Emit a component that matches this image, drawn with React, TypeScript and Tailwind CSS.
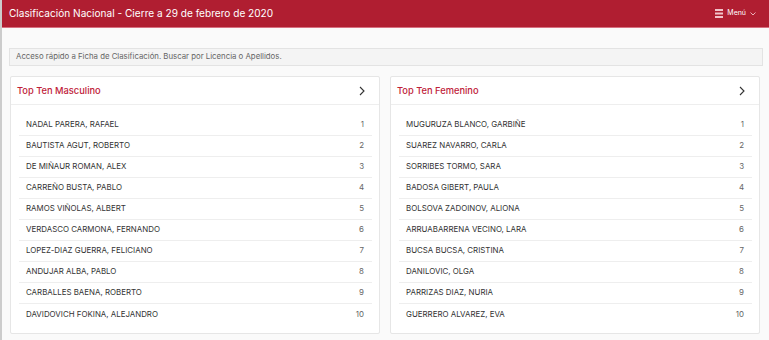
import React from "react";

const men = [
  "NADAL PARERA, RAFAEL",
  "BAUTISTA AGUT, ROBERTO",
  "DE MIÑAUR ROMAN, ALEX",
  "CARREÑO BUSTA, PABLO",
  "RAMOS VIÑOLAS, ALBERT",
  "VERDASCO CARMONA, FERNANDO",
  "LOPEZ-DIAZ GUERRA, FELICIANO",
  "ANDUJAR ALBA, PABLO",
  "CARBALLES BAENA, ROBERTO",
  "DAVIDOVICH FOKINA, ALEJANDRO",
];
const women = [
  "MUGURUZA BLANCO, GARBIÑE",
  "SUAREZ NAVARRO, CARLA",
  "SORRIBES TORMO, SARA",
  "BADOSA GIBERT, PAULA",
  "BOLSOVA ZADOINOV, ALIONA",
  "ARRUABARRENA VECINO, LARA",
  "BUCSA BUCSA, CRISTINA",
  "DANILOVIC, OLGA",
  "PARRIZAS DIAZ, NURIA",
  "GUERRERO ALVAREZ, EVA",
];

function Card({ title, names }: { title: string; names: string[] }) {
  return (
    <div className="flex-1 bg-white border border-[#e6e6e6] rounded-[2px] flex flex-col">
      <div className="h-[28px] flex items-center justify-between pl-[6px] pr-[13px] border-b border-[#eeeeee]">
        <span className="text-[9.3px] text-[#c0223a] font-medium">{title}</span>
        <svg width="8" height="10" viewBox="0 0 8 10" fill="none">
          <path d="M2 1l4 4-4 4" stroke="#333" strokeWidth="1.1" />
        </svg>
      </div>
      <div className="pl-[8px] pr-[7px] pt-[10px] pb-[8px]">
        {names.map((n, i) => (
          <div
            key={n}
            className={`h-[21px] flex items-center justify-between pl-[7px] pr-[8px] ${
              i < names.length - 1 ? "border-b border-[#eeeeee]" : ""
            }`}
          >
            <span className="text-[7.9px] text-[#333]">{n}</span>
            <span className="text-[7.9px] text-[#666]">{i + 1}</span>
          </div>
        ))}
      </div>
    </div>
  );
}

export default function App() {
  return (
    <div
      className="w-[769px] h-[340px] bg-[#fafafa] flex flex-col border-l-2 border-[#cccccc]"
      style={{ fontFamily: "Inter, 'Liberation Sans', sans-serif" }}
    >
      <div className="h-[28px] bg-[#b01e31] border-b border-[#d77080] flex items-center justify-between pl-[7px] pr-[13px] shrink-0">
        <span className="text-white text-[10.1px]">Clasificación Nacional - Cierre a 29 de febrero de 2020</span>
        <div className="flex items-center gap-[4px] text-white text-[7px]">
          <svg width="8" height="9" viewBox="0 0 8 9">
            <rect x="0" y="0" width="8" height="2" fill="#f2c3ca" />
            <rect x="0" y="3.5" width="8" height="2" fill="#f2c3ca" />
            <rect x="0" y="7" width="8" height="2" fill="#f2c3ca" />
          </svg>
          <span>Menú</span>
          <svg width="6" height="4" viewBox="0 0 6 4" fill="none">
            <path d="M0.5 0.5l2.5 2.5L5.5 0.5" stroke="#f2c3ca" strokeWidth="0.9" />
          </svg>
        </div>
      </div>
      <div className="pl-[7px] pr-[6px] pt-[20px]">
        <div className="h-[18px] bg-[#f4f4f4] border border-[#e3e3e3] flex items-center px-[6px] text-[7.8px] text-[#666]">
          Acceso rápido a Ficha de Clasificación. Buscar por Licencia o Apellidos.
        </div>
      </div>
      <div className="flex gap-[10px] pl-[8px] pr-[9px] pt-[10px]">
        <Card title="Top Ten Masculino" names={men} />
        <Card title="Top Ten Femenino" names={women} />
      </div>
    </div>
  );
}
